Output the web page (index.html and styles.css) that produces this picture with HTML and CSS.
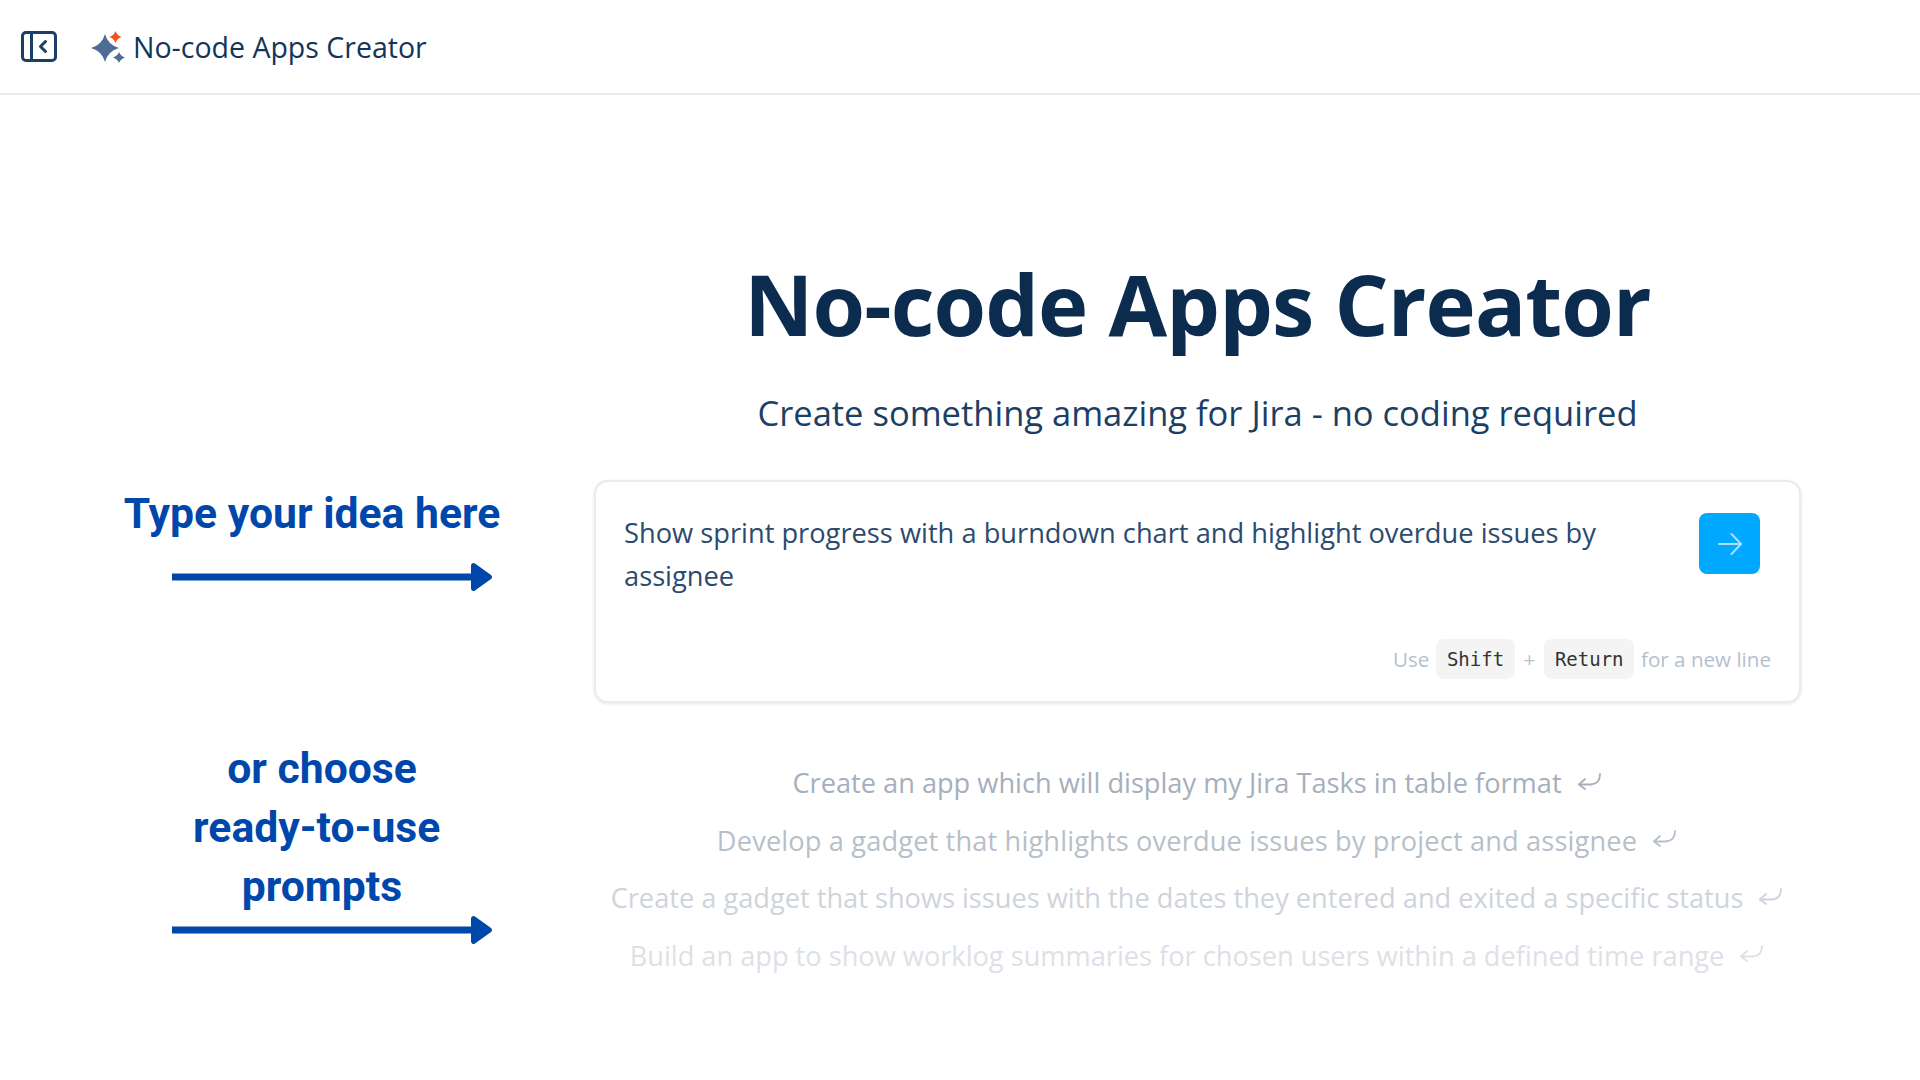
FILE: index.html
```html
<!DOCTYPE html>
<html lang="en">
<head>
<meta charset="utf-8">
<title>No-code Apps Creator</title>
<link rel="stylesheet" href="styles.css">
</head>
<body>
<header class="topbar">
  <svg class="panel-icon" width="36" height="32" viewBox="0 0 36 32" fill="none" stroke="#1b3f66" stroke-width="3" stroke-linejoin="round" stroke-linecap="round">
    <rect x="1.5" y="1.5" width="33" height="28" rx="3.500"/>
    <path d="M10.500 1.500v28"/>
    <path d="M24.500 10.500l-5 5 5 5"/>
  </svg>
  <svg class="spark-icon" width="34" height="32" viewBox="0 0 34 32">
    <path fill="#4f6d94" d="M14 3Q17 14 28 17Q17 20 14 31Q11 20 0 17Q11 14 14 3z"/>
    <path fill="#f4511e" d="M24.500 0Q26 4.500 30.500 6Q26 7.500 24.500 12Q23 7.500 18.500 6Q23 4.500 24.500 0z"/>
    <path fill="#4f6d94" d="M28 21Q29.300 24.800 34 26.500Q29.300 28.200 28 32Q26.700 28.200 22 26.500Q26.700 24.800 28 21z"/>
  </svg>
  <span class="topbar-title">No-code Apps Creator</span>
</header>
<main class="layout">
  <aside class="notes">
    <div class="note note-first">
      <p class="note-text note-text-first">Type your idea here</p>
      <svg class="note-arrow note-arrow-first" width="322" height="30" viewBox="0 0 322 30"><path d="M0 11.500H299V3.500a2.500 2.500 0 0 1 4-2L319 13a2.500 2.500 0 0 1 0 4L303 28.500a2.500 2.500 0 0 1-4-2V18.500H0z" fill="#0047ab"/></svg>
    </div>
    <div class="note note-second">
      <p class="note-text note-text-second">or choose<br>ready-to-use&nbsp;<br>prompts</p>
      <svg class="note-arrow note-arrow-second" width="322" height="30" viewBox="0 0 322 30"><path d="M0 11.500H299V3.500a2.500 2.500 0 0 1 4-2L319 13a2.500 2.500 0 0 1 0 4L303 28.500a2.500 2.500 0 0 1-4-2V18.500H0z" fill="#0047ab"/></svg>
    </div>
  </aside>
  <section class="creator">
    <h1 class="hero-title">No-code Apps Creator</h1>
    <p class="hero-sub">Create something amazing for Jira - no coding required</p>
    <div class="prompt-box">
      <div class="prompt-row">
        <p class="prompt-text">Show sprint progress with a burndown chart and highlight overdue issues by assignee</p>
        <button class="send" type="button" aria-label="Send">
          <svg width="28" height="28" viewBox="0 0 28 28" fill="none" stroke="#a9e0ff" stroke-width="2" stroke-linecap="round" stroke-linejoin="round"><path d="M3 14h22"/><path d="M15.500 4l9.500 10-9.500 10"/></svg>
        </button>
      </div>
      <div class="hint">
        <span>Use</span><kbd class="key">Shift</kbd><span class="plus">+</span><kbd class="key">Return</kbd><span>for a new line</span>
      </div>
    </div>
    <ul class="suggestions">
      <li class="suggestion s1">Create an app which will display my Jira Tasks in table format<svg class="enter" width="26" height="22" viewBox="0 0 26 22" fill="none" stroke="currentColor" stroke-width="1.8" stroke-linecap="round" stroke-linejoin="round"><path d="M23 2c0 6-3 10-9 10.500H2"/><path d="M8 7l-6 5.500 6 4.500"/></svg></li>
      <li class="suggestion s2">Develop a gadget that highlights overdue issues by project and assignee<svg class="enter" width="26" height="22" viewBox="0 0 26 22" fill="none" stroke="currentColor" stroke-width="1.8" stroke-linecap="round" stroke-linejoin="round"><path d="M23 2c0 6-3 10-9 10.500H2"/><path d="M8 7l-6 5.500 6 4.500"/></svg></li>
      <li class="suggestion s3">Create a gadget that shows issues with the dates they entered and exited a specific status<svg class="enter" width="26" height="22" viewBox="0 0 26 22" fill="none" stroke="currentColor" stroke-width="1.8" stroke-linecap="round" stroke-linejoin="round"><path d="M23 2c0 6-3 10-9 10.500H2"/><path d="M8 7l-6 5.500 6 4.500"/></svg></li>
      <li class="suggestion s4">Build an app to show worklog summaries for chosen users within a defined time range<svg class="enter" width="26" height="22" viewBox="0 0 26 22" fill="none" stroke="currentColor" stroke-width="1.8" stroke-linecap="round" stroke-linejoin="round"><path d="M23 2c0 6-3 10-9 10.500H2"/><path d="M8 7l-6 5.500 6 4.500"/></svg></li>
    </ul>
  </section>
</main>
</body>
</html>
```
FILE: styles.css
```css
* { box-sizing: border-box; }
html, body { margin: 0; padding: 0; }
body {
  width: 1920px;
  height: 1080px;
  overflow: hidden;
  background: #fff;
  font-family: "Open Sans", "Noto Sans", sans-serif;
  color: #0c2c4f;
}
.topbar {
  height: 95px;
  display: flex;
  align-items: center;
  padding-left: 21px;
  border-bottom: 2px solid #e9ebf0;
}
.panel-icon { flex: none; }
.spark-icon { flex: none; margin-left: 34px; }
.topbar-title {
  margin-left: 8px;
  font-size: 28.500px;
  font-weight: 500;
  color: #12355b;
  white-space: nowrap;
}
.layout {
  display: grid;
  grid-template-columns: 594px 1207px;
}
.notes { display: flex; flex-direction: column; }
.note-first { padding-top: 389px; }
.note-second { margin-top: 147px; }
.note-text {
  margin: 0;
  font-family: Roboto, sans-serif;
  font-weight: 700;
  font-size: 42.700px;
  line-height: 59px;
  color: #0047ab;
  text-align: center;
}
.note-text-first { width: 624px; }
.note-text-second { width: 644px; }
.note-arrow { display: block; margin-left: 172px; }
.note-arrow-first { margin-top: 19px; }
.note-arrow-second { margin-top: -1px; }
.creator { display: flex; flex-direction: column; align-items: center; }
.hero-title {
  margin: 150px 0 0;
  font-size: 85px;
  letter-spacing: -.9px;
  line-height: 116px;
  font-weight: 700;
  color: #0c2c4f;
  white-space: nowrap;
}
.hero-sub {
  margin: 28px 0 0;
  font-size: 34.500px;
  line-height: 48px;
  color: #1b3f66;
  white-space: nowrap;
}
.prompt-box {
  width: 1207px;
  height: 223px;
  margin-top: 43px;
  padding: 29px 28px 0;
  background: #fff;
  border: 2px solid #e9ebf0;
  border-radius: 14px;
  box-shadow: 0 1px 3px rgba(20, 40, 70, .12);
  display: flex;
  flex-direction: column;
}
.prompt-row { display: flex; justify-content: space-between; align-items: flex-start; }
.prompt-text {
  margin: 0;
  width: 1020px;
  font-size: 27.250px;
  line-height: 43px;
  color: #2c4a6e;
}
.send {
  flex: none;
  width: 61px;
  height: 61px;
  margin: 2px 11px 0 0;
  padding: 0;
  border: 0;
  border-radius: 8px;
  background: #00a9ff;
  display: flex;
  align-items: center;
  justify-content: center;
}
.hint {
  margin-top: auto;
  margin-bottom: 22px;
  display: flex;
  justify-content: flex-end;
  align-items: center;
  gap: 7px;
  font-size: 20.600px;
  color: #b4bfcd;
}
.plus { margin: 0 2px; }
.key {
  font-family: "DejaVu Sans Mono", "Liberation Mono", monospace;
  font-size: 19px;
  line-height: 40px;
  padding: 0 10.500px;
  color: #333;
  background: #f4f4f5;
  border-radius: 8px;
}
.suggestions {
  list-style: none;
  margin: 60px 0 0;
  padding: 0;
  display: flex;
  flex-direction: column;
  align-items: center;
  gap: 18px;
  font-size: 27.200px;
  line-height: 39.500px;
}
.suggestion { display: flex; align-items: center; white-space: nowrap; }
.enter { margin-left: 15px; flex: none; }
.s1 { color: #a5afbd; }
.s2 { color: #b6bfca; letter-spacing: .15px; }
.s3 { color: #ced4dc; }
.s4 { color: #dde1e7; }
```
